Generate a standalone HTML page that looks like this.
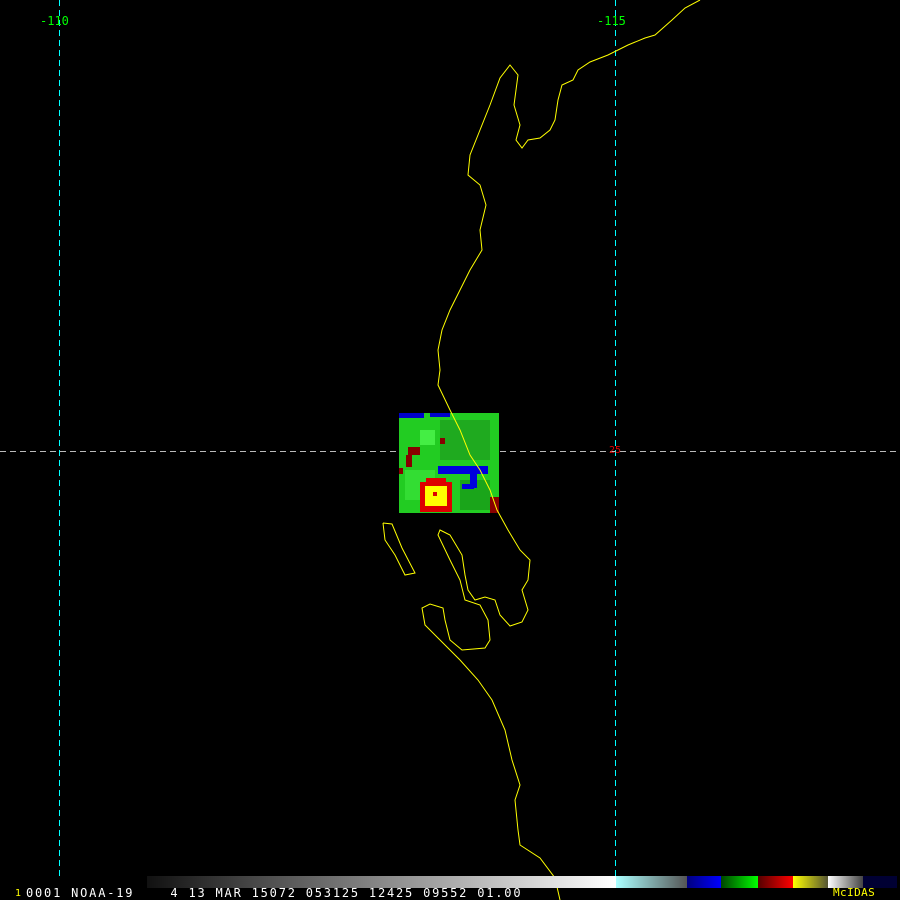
<!DOCTYPE html>
<html><head><meta charset="utf-8"><style>
html,body{margin:0;padding:0;background:#000;width:900px;height:900px;overflow:hidden;position:relative;font-family:"DejaVu Sans Mono","Liberation Mono",monospace}
.t{position:absolute;font-size:12px;line-height:12px;white-space:pre}
.v{position:absolute;top:0;width:1px;height:876px;background:repeating-linear-gradient(to bottom,#00ffff 0,#00ffff 6px,transparent 6px,transparent 10px)}
.h{position:absolute;left:0;top:451px;width:900px;height:1px;background:repeating-linear-gradient(to right,#bbbbbb 0,#bbbbbb 6px,transparent 6px,transparent 10px)}
</style></head><body>
<div class="v" style="left:59px"></div>
<div class="v" style="left:615px"></div>
<div class="h"></div>
<svg width="900" height="900" style="position:absolute;left:0;top:0" shape-rendering="crispEdges">
<rect x="399" y="413" width="100" height="100" fill="#22cc22"/>
<rect x="440" y="420" width="50" height="40" fill="#1faa1f"/>
<rect x="405" y="470" width="30" height="30" fill="#33dd33"/>
<rect x="460" y="480" width="30" height="30" fill="#1aa51a"/>
<rect x="420" y="430" width="15" height="15" fill="#44ee44"/>
<rect x="399" y="413" width="25" height="5" fill="#0000cc"/>
<rect x="430" y="413" width="20" height="4" fill="#0000cc"/>
<rect x="438" y="466" width="50" height="8" fill="#0000dd"/>
<rect x="470" y="470" width="7" height="18" fill="#0000dd"/>
<rect x="462" y="484" width="12" height="5" fill="#0000dd"/>
<rect x="408" y="447" width="12" height="8" fill="#880000"/>
<rect x="406" y="455" width="6" height="12" fill="#880000"/>
<rect x="440" y="438" width="5" height="6" fill="#880000"/>
<rect x="399" y="468" width="4" height="6" fill="#880000"/>
<rect x="490" y="497" width="9" height="16" fill="#880000"/>
<rect x="420" y="482" width="32" height="30" fill="#dd0000"/>
<rect x="426" y="478" width="20" height="6" fill="#dd0000"/>
<rect x="425" y="486" width="22" height="20" fill="#ffff00"/>
<rect x="433" y="492" width="4" height="4" fill="#dd0000"/>
<polyline fill="none" stroke="#ffff00" stroke-width="1" shape-rendering="auto" points="700,0 685,8 672,20 655,35 645,38 628,45 608,55 590,62 578,70 573,80 562,85 558,100 555,120 550,130 540,138 528,140 522,148 516,140 520,125 514,105 518,75 510,65 500,78 490,105 480,130 470,155 468,175 480,185 486,205 480,230 482,250 470,270 460,290 450,310 442,330 438,350 440,370 438,385 450,410 460,430 470,455 480,470 490,490 497,510 508,530 520,550 530,560 528,580 522,590 528,610 522,622 510,626 500,615 495,600 485,597 475,600 468,590 465,575 462,555 450,535 440,530 438,535 450,560 460,580 465,600 480,605 488,620 490,640 485,648 462,650 450,640 445,620 443,608 430,604 422,608 425,625 440,640 460,660 478,680 492,700 505,730 512,760 520,785 515,800 518,830 520,845 540,858 555,878 560,900"/>
<polyline fill="none" stroke="#ffff00" stroke-width="1" shape-rendering="auto" points="383,523 392,524 402,548 415,573 405,575 395,555 385,540 383,523"/>
<defs><linearGradient id="g1"><stop offset="0" stop-color="#111"/><stop offset="1" stop-color="#fff"/></linearGradient>
<linearGradient id="g2"><stop offset="0" stop-color="#aaffff"/><stop offset="1" stop-color="#555"/></linearGradient>
<linearGradient id="g3"><stop offset="0" stop-color="#004400"/><stop offset="1" stop-color="#00ff00"/></linearGradient>
<linearGradient id="g4"><stop offset="0" stop-color="#550000"/><stop offset="1" stop-color="#ff0000"/></linearGradient>
<linearGradient id="g5"><stop offset="0" stop-color="#ffff00"/><stop offset="1" stop-color="#555533"/></linearGradient>
<linearGradient id="g6"><stop offset="0" stop-color="#fff"/><stop offset="1" stop-color="#444"/></linearGradient>
<linearGradient id="g7"><stop offset="0" stop-color="#000080"/><stop offset="1" stop-color="#0000ff"/></linearGradient></defs>
<rect x="147" y="876" width="469" height="12" fill="url(#g1)"/>
<rect x="616" y="876" width="71" height="12" fill="url(#g2)"/>
<rect x="687" y="876" width="34" height="12" fill="url(#g7)"/>
<rect x="721" y="876" width="37" height="12" fill="url(#g3)"/>
<rect x="758" y="876" width="35" height="12" fill="url(#g4)"/>
<rect x="793" y="876" width="35" height="12" fill="url(#g5)"/>
<rect x="828" y="876" width="35" height="12" fill="url(#g6)"/>
<rect x="863" y="876" width="34" height="12" fill="#000033"/>
</svg>
<div class="t" style="left:40px;top:15px;color:#0f0">-110</div>
<div class="t" style="left:597px;top:15px;color:#0f0">-115</div>
<div class="t" style="left:609px;top:445px;color:#d00;font-size:10px">25</div>
<div class="t" style="left:15px;top:888px;color:#ff0;font-size:10px">1</div>
<div class="t" style="left:26px;top:887px;color:#fff;letter-spacing:1.8px">0001 NOAA-19    4 13 MAR 15072 053125 12425 09552 01.00</div>
<div class="t" style="left:833px;top:887px;color:#ff0;font-size:11px;letter-spacing:0.4px">McIDAS</div>
</body></html>
